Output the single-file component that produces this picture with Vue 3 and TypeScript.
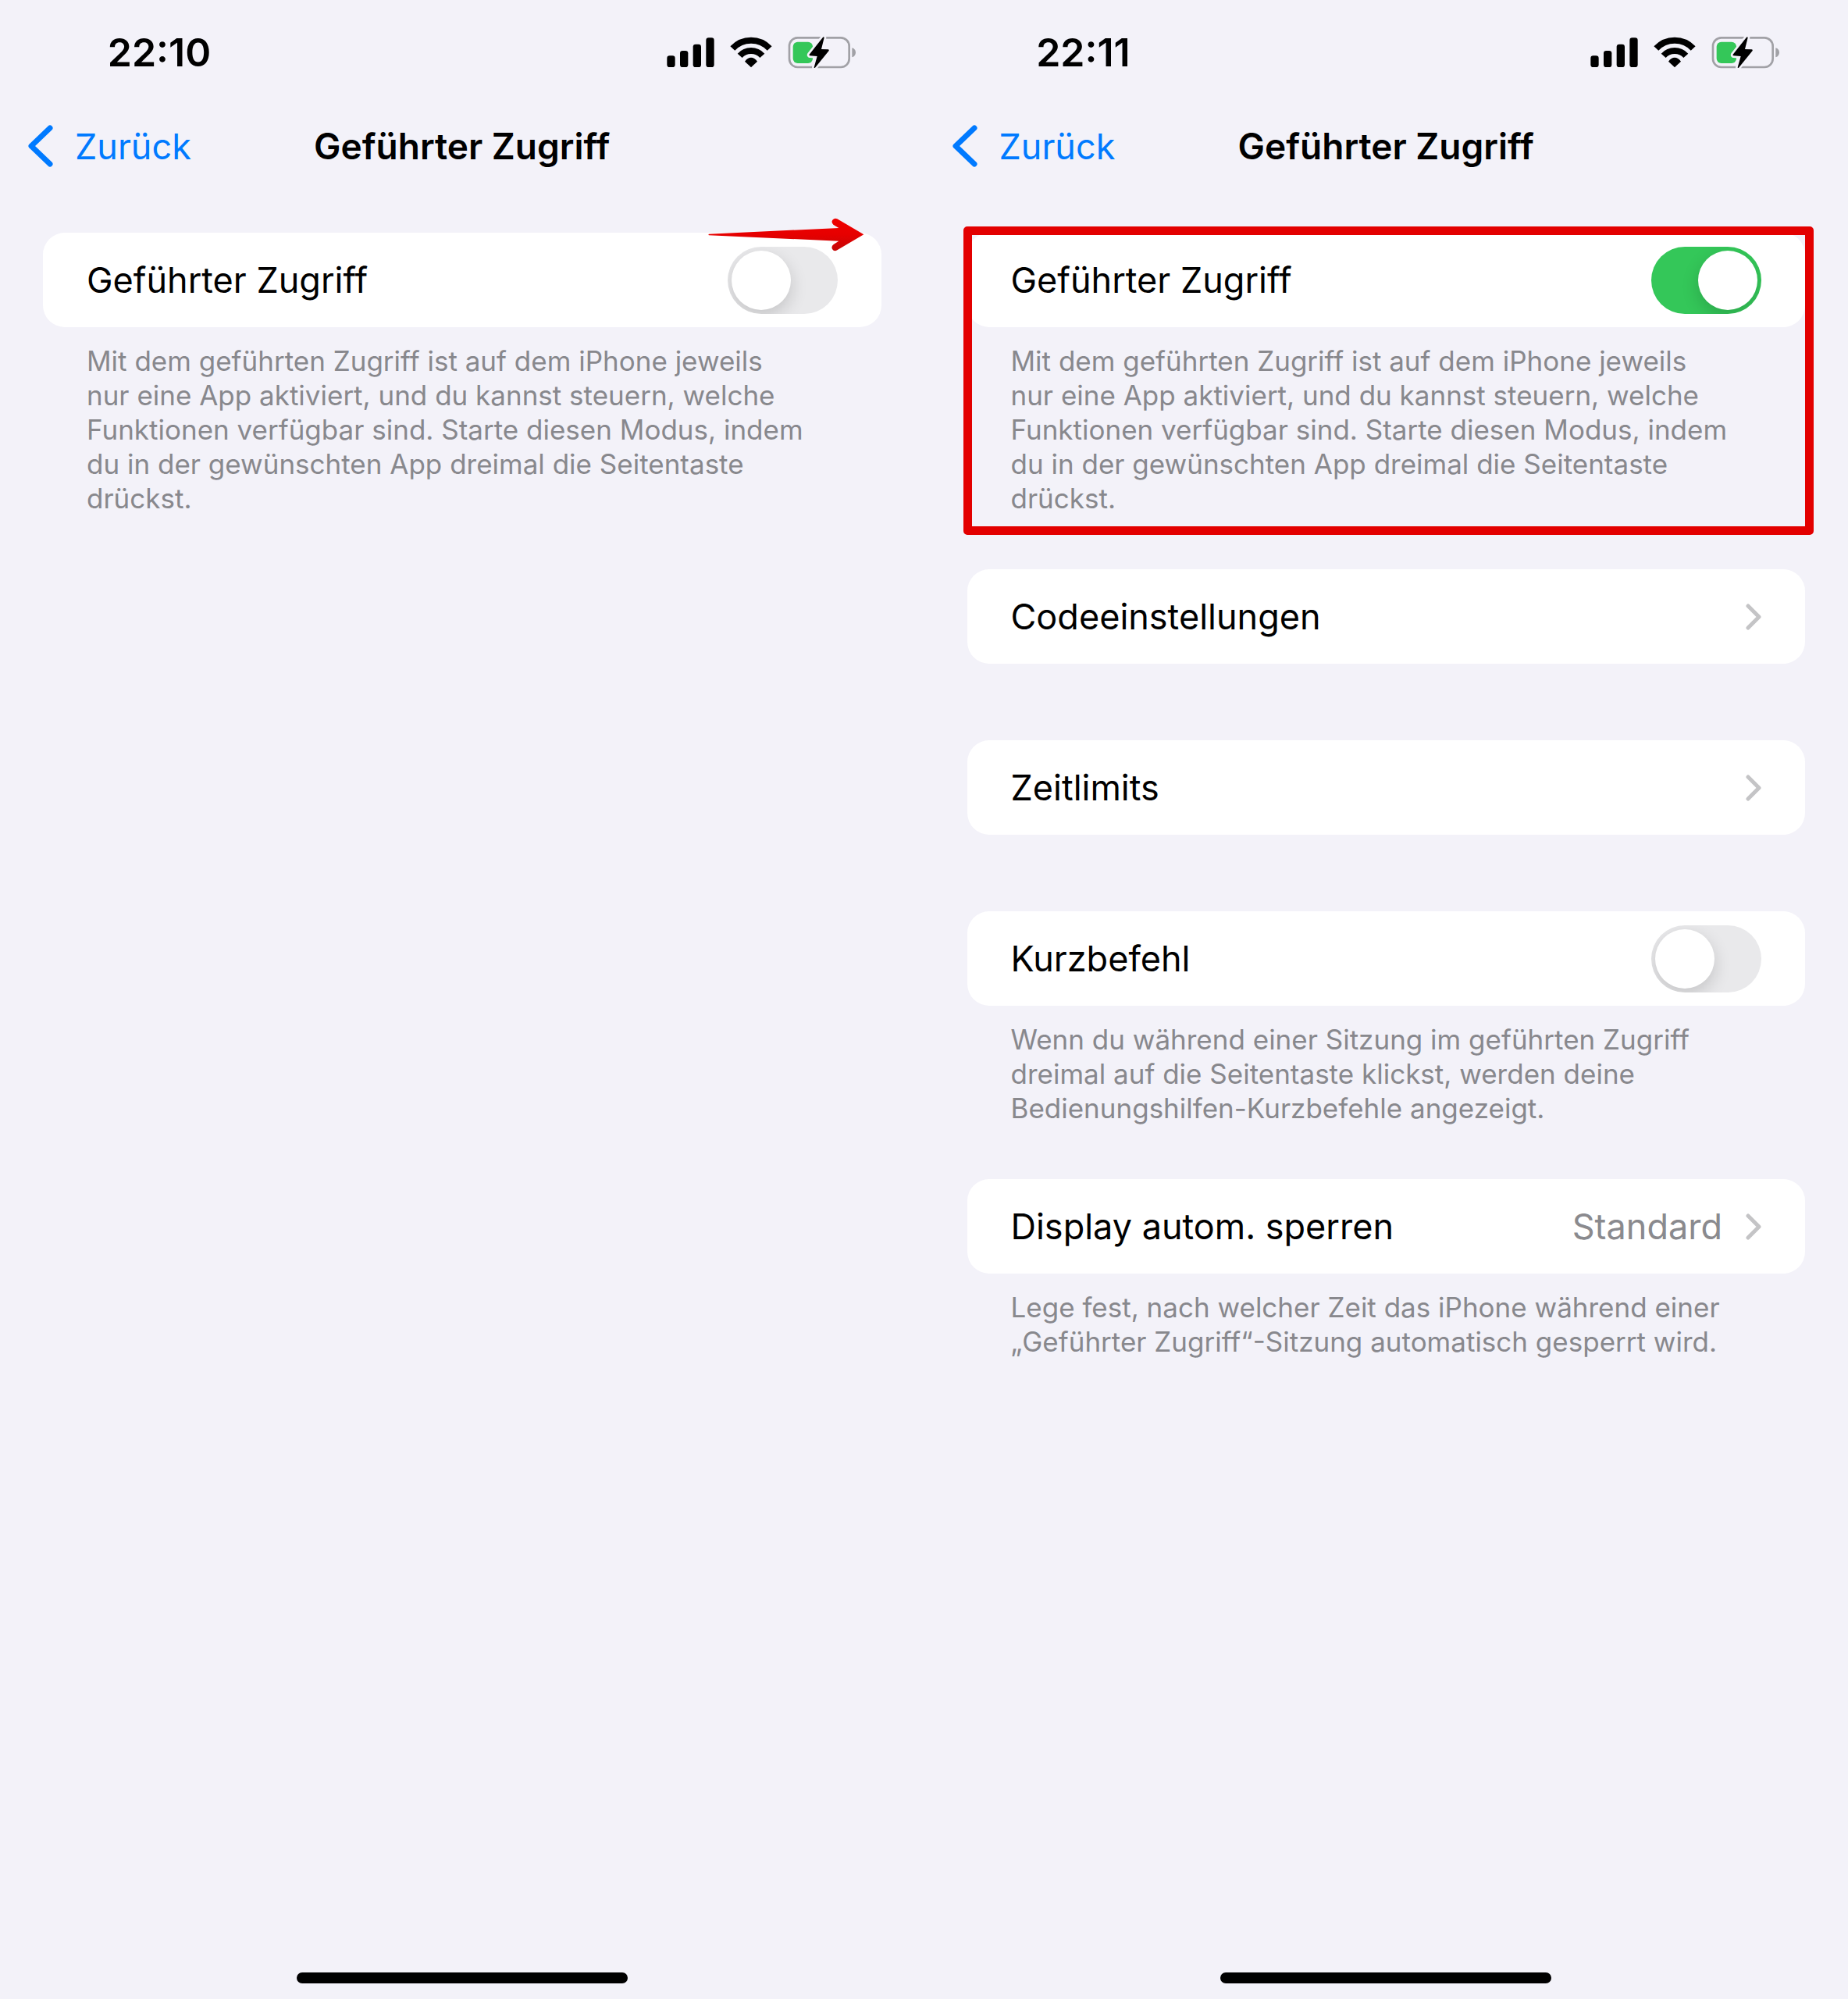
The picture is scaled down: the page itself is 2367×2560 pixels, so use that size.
<script setup lang="ts">
import { ref } from 'vue'

interface Row {
  id: string
  label: string
  kind: 'switch' | 'link'
  on?: boolean
  value?: string
  note?: string
  mark?: 'arrow' | 'frame'
}

interface Screen {
  id: string
  time: string
  rows: Row[]
}

const accessNote =
  'Mit dem geführten Zugriff ist auf dem iPhone jeweils\nnur eine App aktiviert, und du kannst steuern, welche\nFunktionen verfügbar sind. Starte diesen Modus, indem\ndu in der gewünschten App dreimal die Seitentaste\ndrückst.'

const screens = ref<Screen[]>([
  {
    id: 'off',
    time: '22:10',
    rows: [
      { id: 'access', label: 'Geführter Zugriff', kind: 'switch', on: false, note: accessNote, mark: 'arrow' },
    ],
  },
  {
    id: 'on',
    time: '22:11',
    rows: [
      { id: 'access', label: 'Geführter Zugriff', kind: 'switch', on: true, note: accessNote, mark: 'frame' },
      { id: 'code', label: 'Codeeinstellungen', kind: 'link' },
      { id: 'limits', label: 'Zeitlimits', kind: 'link' },
      {
        id: 'shortcut',
        label: 'Kurzbefehl',
        kind: 'switch',
        on: false,
        note: 'Wenn du während einer Sitzung im geführten Zugriff\ndreimal auf die Seitentaste klickst, werden deine\nBedienungshilfen-Kurzbefehle angezeigt.',
      },
      {
        id: 'lock',
        label: 'Display autom. sperren',
        kind: 'link',
        value: 'Standard',
        note: 'Lege fest, nach welcher Zeit das iPhone während einer\n„Geführter Zugriff“-Sitzung automatisch gesperrt wird.',
      },
    ],
  },
])
</script>

<template>
  <div class="page">
    <section v-for="screen in screens" :key="screen.id" class="screen">
      <div class="status">
        <time class="clock">{{ screen.time }}</time>
        <svg class="indicators" viewBox="100 75 729 129" aria-hidden="true">
          <!-- signal -->
          <rect x="101" y="151" width="31" height="44" rx="10" />
          <rect x="151" y="132" width="31" height="63" rx="10" />
          <rect x="201" y="107" width="31" height="88" rx="10" />
          <rect x="251" y="82" width="31" height="113" rx="10" />
          <!-- wifi -->
          <g fill="none" stroke="#000" stroke-width="24">
            <path d="M353 123A97 97 0 0 1 495 123" />
            <path d="M381 151A58 58 0 0 1 467 151" />
          </g>
          <path d="M424 196L400 173Q411 158 424 158T448 173Z" />
          <!-- battery -->
          <rect x="571" y="82" width="230" height="113" rx="32" fill="none" stroke="#a1a1a6" stroke-width="8" />
          <path d="M812 121Q826 125 826 139T812 157Z" fill="#a1a1a6" />
          <rect x="585" y="98" width="76" height="82" rx="18" fill="#34c759" />
          <path
            d="M700 80L648 146Q646 150 650 151L678 153L666 196Q666 200 670 197L723 132Q725 128 720 127L694 126L705 82Q704 77 700 80Z"
            stroke="#f3f2f9"
            stroke-width="16"
            stroke-linejoin="round"
            paint-order="stroke"
          />
        </svg>
      </div>

      <header class="nav">
        <button type="button" class="back">
          <svg class="back-icon" viewBox="0 0 32 54" aria-hidden="true">
            <path d="M28 4L4 27L28 50" />
          </svg>
          Zurück
        </button>
        <h1 class="title">Geführter Zugriff</h1>
      </header>

      <main class="list">
        <div v-for="row in screen.rows" :key="row.id" class="group" :class="{ noted: row.note }">
          <label v-if="row.kind === 'switch'" class="row">
            <span class="label">{{ row.label }}</span>
            <input v-model="row.on" type="checkbox" role="switch" class="switch" />
          </label>
          <button v-else type="button" class="row">
            <span class="label">{{ row.label }}</span>
            <span v-if="row.value" class="value">{{ row.value }}</span>
            <svg class="more" viewBox="0 0 20 34" aria-hidden="true">
              <path d="M3 3L17 17L3 31" />
            </svg>
          </button>
          <p v-if="row.note" class="note">{{ row.note }}</p>

          <svg v-if="row.mark === 'arrow'" class="arrow" viewBox="84 58 600 129" aria-hidden="true">
            <defs>
              <linearGradient id="arrow-fill" x1="0" x2="0" y1="0" y2="1">
                <stop offset="0" stop-color="#f00000" />
                <stop offset="0.5" stop-color="#e60000" />
                <stop offset="1" stop-color="#c40606" />
              </linearGradient>
            </defs>
            <path
              d="M87 120L586 97L565 84Q556 75 562 66Q570 57 580 62L682 122L580 182Q568 189 561 178Q556 168 566 160L586 147L87 125Q84 122 87 120Z"
              fill="url(#arrow-fill)"
            />
          </svg>
          <div v-if="row.mark === 'frame'" class="frame"></div>
        </div>
      </main>

      <div class="home"></div>
    </section>
  </div>
</template>

<style>
body {
  background: #f3f2f9;
}
</style>

<style scoped>
.page {
  display: grid;
  grid-template-columns: 1fr 1fr;
  min-height: 100vh;
  background: #f3f2f9;
  color: #000;
  font-family: Inter, 'Liberation Sans', sans-serif;
  font-size: 45px;
}

.screen {
  display: flex;
  flex-direction: column;
  align-items: stretch;
}

.status {
  display: flex;
  align-items: center;
  justify-content: space-between;
  height: 134px;
  padding-right: 87px;
}

.clock {
  width: 408px;
  font-size: 50px;
  font-weight: 600;
  line-height: 60px;
  text-align: center;
}

.indicators {
  width: 243px;
  height: 43px;
}

.nav {
  display: grid;
  grid-template-columns: 1fr auto 1fr;
  align-items: center;
  height: 106px;
  margin-bottom: 58px;
  padding: 0 36px;
}

.back {
  display: flex;
  align-items: center;
  gap: 28px;
  padding: 0;
  border: 0;
  background: none;
  color: #007aff;
  font: inherit;
}

.back-icon {
  width: 32px;
  height: 54px;
  fill: none;
  stroke: currentColor;
  stroke-width: 7;
  stroke-linecap: round;
  stroke-linejoin: round;
}

.title {
  margin: 0;
  font-size: 46px;
  font-weight: 600;
}

.list {
  flex: 1;
  padding: 0 55px;
}

.group {
  position: relative;
  padding-bottom: 98px;
}

.group.noted {
  padding-bottom: 69px;
}

.row {
  display: flex;
  align-items: center;
  box-sizing: border-box;
  width: 100%;
  height: 121px;
  padding: 0 56px;
  border: 0;
  border-radius: 28px;
  background: #fff;
  color: inherit;
  font: inherit;
  text-align: left;
}

.label {
  flex: 1;
}

.value {
  margin-right: 30px;
  color: #8a8a8e;
}

.more {
  width: 20px;
  height: 34px;
  fill: none;
  stroke: #c4c4c6;
  stroke-width: 5;
  stroke-linecap: round;
  stroke-linejoin: round;
}

.switch {
  display: flex;
  align-items: center;
  box-sizing: border-box;
  width: 141px;
  height: 86px;
  margin: 0;
  padding: 0 5px;
  overflow: hidden;
  border-radius: 43px;
  background: #e9e9eb;
  appearance: none;
}

.switch::before {
  width: 76px;
  height: 76px;
  border-radius: 50%;
  background: #fff;
  box-shadow: 0 8px 22px rgba(0, 0, 0, 0.16);
  content: '';
}

.switch:checked {
  justify-content: flex-end;
  background: #34c759;
}

.note {
  margin: 0;
  padding: 21px 56px 0;
  color: #88888d;
  font-size: 35px;
  line-height: 44px;
  white-space: pre-line;
}

.arrow {
  position: absolute;
  top: -19px;
  right: 22px;
  width: 200px;
  height: 43px;
}

.frame {
  position: absolute;
  inset: -8px -11px 44px -5px;
  border: 11px solid #e30000;
  border-radius: 5px;
}

.home {
  align-self: center;
  width: 424px;
  height: 14px;
  margin-bottom: 20px;
  border-radius: 7px;
  background: #000;
}
</style>
